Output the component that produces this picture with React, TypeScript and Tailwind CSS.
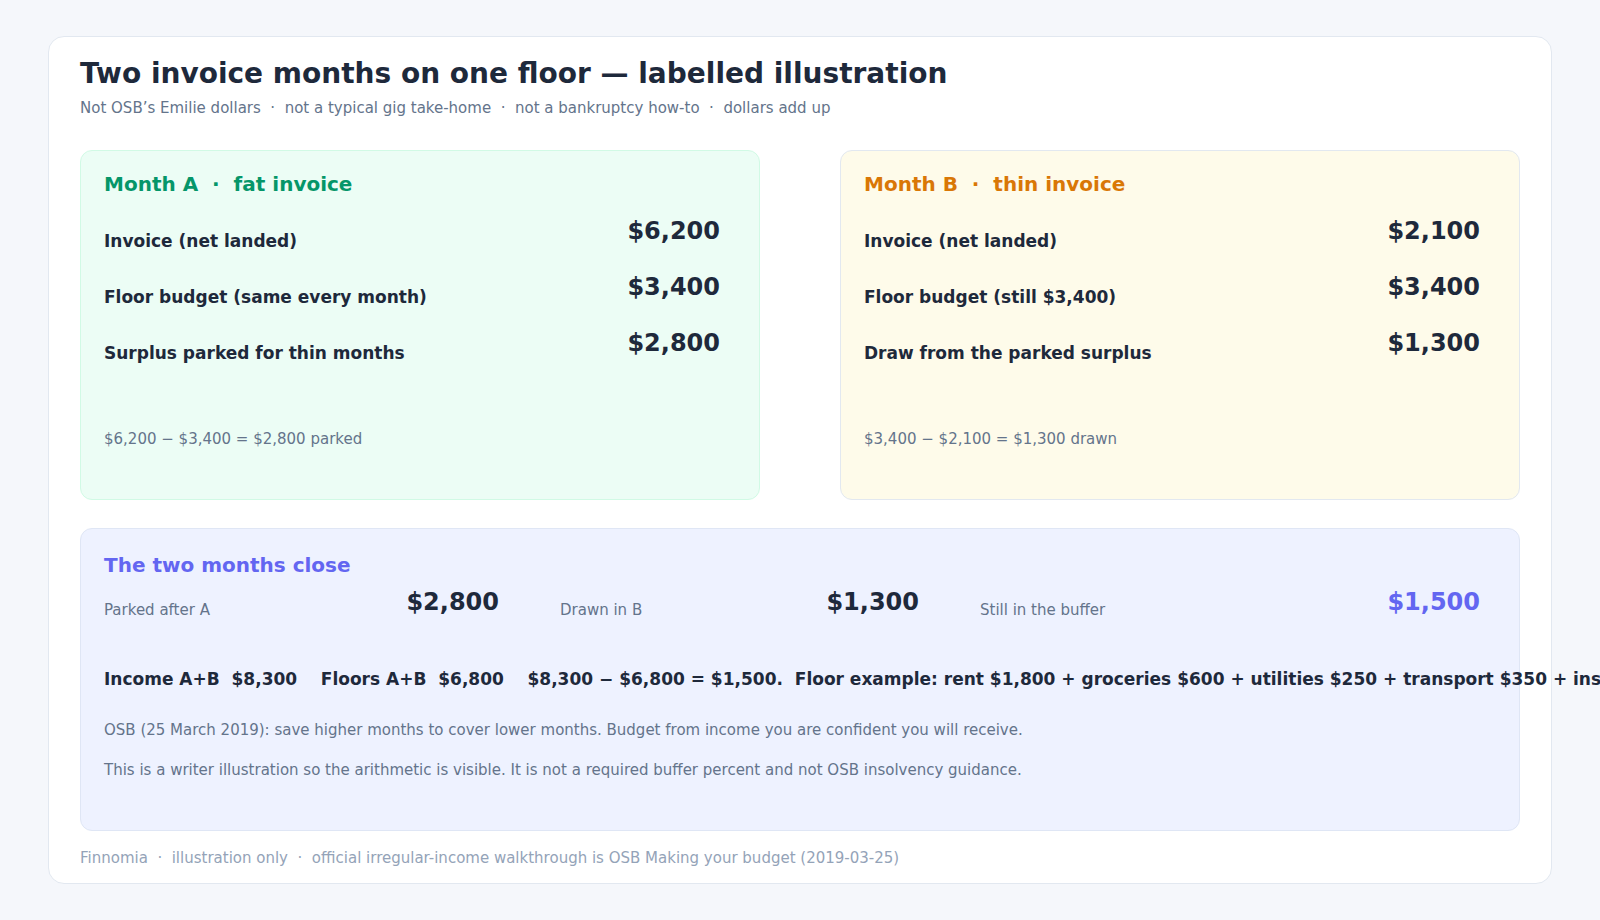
import React from 'react';

interface Row {
  label: string;
  value: string;
}

interface MonthCardProps {
  title: string;
  titleClass: string;
  cardClass: string;
  rows: Row[];
  note: string;
}

const MonthCard = ({ title, titleClass, cardClass, rows, note }: MonthCardProps) => {
  return (
    <div className={`h-[350px] rounded-xl border px-[23px] pt-[21px] ${cardClass}`}>
      <h2 className={`whitespace-pre text-[20px] font-bold leading-[24px] ${titleClass}`}>{title}</h2>
      <div className="mt-[21px] flex flex-col gap-[22px] pr-4">
        {rows.map((row) => (
          <div key={row.label} className="flex items-start justify-between">
            <span className="pt-[14px] text-[17px] font-bold leading-[20px] text-[#1e293b]">{row.label}</span>
            <span className="text-[24px] font-bold leading-[28px] text-[#1e293b]">{row.value}</span>
          </div>
        ))}
      </div>
      <p className="mt-[66px] text-[15px] leading-[20px] text-[#64748b]">{note}</p>
    </div>
  );
};

interface StatProps {
  label: string;
  value: string;
  accent?: boolean;
}

const Stat = ({ label, value, accent }: StatProps) => (
  <div className="flex items-start justify-between">
    <span className="pt-[12px] text-[15px] leading-[20px] text-[#64748b]">{label}</span>
    <span className={`text-[24px] font-bold leading-[28px] ${accent ? 'text-[#6366f1]' : 'text-[#1e293b]'}`}>
      {value}
    </span>
  </div>
);

const App = () => {
  return (
    <div className="h-[920px] w-full overflow-hidden bg-[#f5f7fb] px-12 pt-9 font-['DejaVu_Sans',sans-serif]">
      <div className="h-[848px] rounded-2xl border border-[#e2e8f0] bg-white px-[31px] pt-[20px]">
        <h1 className="text-[28px] font-bold leading-[34px] text-[#1e293b]">
          Two invoice months on one floor — labelled illustration
        </h1>
        <p className="mt-[7px] whitespace-pre text-[15px] leading-[20px] text-[#64748b]">
          {'Not OSB’s Emilie dollars  ·  not a typical gig take-home  ·  not a bankruptcy how-to  ·  dollars add up'}
        </p>

        <div className="mt-[32px] grid grid-cols-2 gap-x-20">
          <MonthCard
            title="Month A  ·  fat invoice"
            titleClass="text-[#059669]"
            cardClass="border-[#d1fae5] bg-[#ecfdf5]"
            rows={[
              { label: 'Invoice (net landed)', value: '$6,200' },
              { label: 'Floor budget (same every month)', value: '$3,400' },
              { label: 'Surplus parked for thin months', value: '$2,800' },
            ]}
            note="$6,200 − $3,400 = $2,800 parked"
          />
          <MonthCard
            title="Month B  ·  thin invoice"
            titleClass="text-[#d97706]"
            cardClass="border-[#e2e8f0] bg-[#fefbea]"
            rows={[
              { label: 'Invoice (net landed)', value: '$2,100' },
              { label: 'Floor budget (still $3,400)', value: '$3,400' },
              { label: 'Draw from the parked surplus', value: '$1,300' },
            ]}
            note="$3,400 − $2,100 = $1,300 drawn"
          />
        </div>

        <div className="mt-7 h-[303px] rounded-xl border border-[#dfe6f5] bg-[#eef2ff] px-[23px] pt-[24px]">
          <h2 className="text-[20px] font-bold leading-[24px] text-[#6366f1]">The two months close</h2>
          <div className="mt-[11px] grid grid-cols-[395px_359px_500px] gap-x-[61px]">
            <Stat label="Parked after A" value="$2,800" />
            <Stat label="Drawn in B" value="$1,300" />
            <Stat label="Still in the buffer" value="$1,500" accent />
          </div>
          <p className="mt-[49px] whitespace-pre text-[17px] font-bold leading-[20px] text-[#1e293b]">
            {'Income A+B  $8,300    Floors A+B  $6,800    $8,300 − $6,800 = $1,500.  Floor example: rent $1,800 + groceries $600 + utilities $250 + transport $350 + insurance $400 = $3,400.'}
          </p>
          <p className="mt-[31px] text-[15px] leading-[20px] text-[#64748b]">
            OSB (25 March 2019): save higher months to cover lower months. Budget from income you are confident you will receive.
          </p>
          <p className="mt-[20px] text-[15px] leading-[20px] text-[#64748b]">
            This is a writer illustration so the arithmetic is visible. It is not a required buffer percent and not OSB insolvency guidance.
          </p>
        </div>

        <p className="mt-[17px] whitespace-pre text-[15px] leading-[20px] text-[#94a3b8]">
          {'Finnomia  ·  illustration only  ·  official irregular-income walkthrough is OSB Making your budget (2019-03-25)'}
        </p>
      </div>
    </div>
  );
};

export default App;
